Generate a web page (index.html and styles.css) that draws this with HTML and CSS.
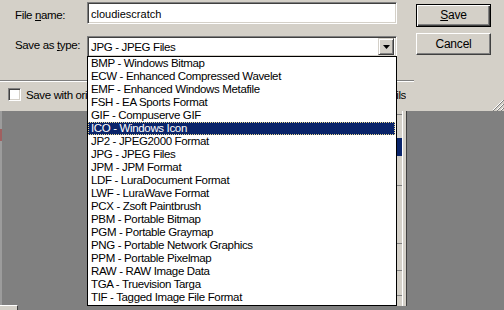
FILE: index.html
```html
<!DOCTYPE html>
<html>
<head>
<meta charset="utf-8">
<link rel="stylesheet" href="styles.css">
</head>
<body>
<div class="screen">
  <div class="dialog">
    <div class="form">
      <div class="lbl">File <u>n</u>ame:</div>
      <div class="input">cloudiescratch</div>
      <div class="btn default"><u>S</u>ave</div>
      <div class="lbl lbl2">Save as <u>t</u>ype:</div>
      <div class="combo"><span class="combo-text">JPG - JPEG Files</span><span class="arrow"><svg width="7" height="4" viewBox="0 0 7 4"><path d="M0 0h7L3.5 4z" fill="#000"/></svg></span></div>
      <div class="btn cancel">Cancel</div>
    </div>
    <div class="sep"></div>
    <div class="opts">
      <span class="chk"></span>
      <span class="opt-text">Save with original date/time</span>
      <span class="opt-right"><span class="opt-right-inner">Keep EXIF details</span></span>
    </div>
    <svg class="grip" width="12" height="12" viewBox="0 0 12 12">
      <path d="M11 1L1 11M11 5L5 11M11 9L9 11" stroke="#fff" stroke-width="1"/>
      <path d="M12 1L1 12M12 5L5 12M12 9L9 12" stroke="#808080" stroke-width="1"/>
    </svg>
  </div>
  <div class="desk">
    <div class="edge"></div>
    <div class="corner"></div>
    <div class="strip"><div class="strip-blue"></div></div>
  </div>
  <ul class="list">
    <li>BMP - Windows Bitmap</li>
    <li>ECW - Enhanced Compressed Wavelet</li>
    <li>EMF - Enhanced Windows Metafile</li>
    <li>FSH - EA Sports Format</li>
    <li>GIF - Compuserve GIF</li>
    <li class="sel">ICO - Windows Icon</li>
    <li>JP2 - JPEG2000 Format</li>
    <li>JPG - JPEG Files</li>
    <li>JPM - JPM Format</li>
    <li>LDF - LuraDocument Format</li>
    <li>LWF - LuraWave Format</li>
    <li>PCX - Zsoft Paintbrush</li>
    <li>PBM - Portable Bitmap</li>
    <li>PGM - Portable Graymap</li>
    <li>PNG - Portable Network Graphics</li>
    <li>PPM - Portable Pixelmap</li>
    <li>RAW - RAW Image Data</li>
    <li>TGA - Truevision Targa</li>
    <li>TIF - Tagged Image File Format</li>
  </ul>
</div>
</body>
</html>
```

FILE: styles.css
```css
html, body {
  margin: 0;
  padding: 0;
}
body {
  width: 504px;
  height: 310px;
  overflow: hidden;
  background: #808080;
  font-family: "Liberation Sans", Arial, sans-serif;
  font-size: 11.5px;
  letter-spacing: -0.35px;
  color: #000;
}
.screen {
  position: relative;
  width: 504px;
  height: 310px;
  display: flex;
  flex-direction: column;
}
.dialog {
  position: relative;
  height: 111px;
  background: #d4d0c8;
  flex: none;
}
.form {
  display: grid;
  grid-template-columns: 87px 310px 75px;
  grid-template-rows: 31px 47px;
  padding-top: 2px;
}
.lbl {
  padding-left: 15px;
  padding-top: 2px;
  line-height: 22px;
}
.lbl2 {
  padding-top: 1px;
}
.input {
  box-sizing: border-box;
  height: 22px;
  background: #fff;
  border-top: 1px solid #808080;
  border-left: 1px solid #808080;
  border-right: 1px solid #fff;
  border-bottom: 1px solid #fff;
  box-shadow: inset 1px 1px 0 #404040, inset -1px -1px 0 #d4d0c8;
  padding-left: 3px;
  padding-top: 1px;
  line-height: 20px;
  font-size: 11px;
  letter-spacing: 0;
}
.btn {
  box-sizing: border-box;
  margin-left: 19px;
  width: 75px;
  height: 22px;
  text-align: center;
  line-height: 20px;
  font-size: 12px;
  letter-spacing: -0.2px;
  background: #d4d0c8;
  border-top: 1px solid #fff;
  border-left: 1px solid #fff;
  border-right: 1px solid #404040;
  border-bottom: 1px solid #404040;
  box-shadow: inset -1px -1px 0 #808080;
}
.btn.default {
  margin-top: 2px;
  height: 23px;
  border: 1px solid #000;
  box-shadow: inset 1px 1px 0 #fff, inset -1px -1px 0 #404040, inset -2px -2px 0 #808080;
  line-height: 21px;
}
.combo {
  box-sizing: border-box;
  margin-top: 3px;
  height: 21px;
  background: #fff;
  border-top: 1px solid #808080;
  border-left: 1px solid #808080;
  border-right: 1px solid #fff;
  border-bottom: 1px solid #fff;
  box-shadow: inset 1px 1px 0 #404040, inset -1px -1px 0 #d4d0c8;
  display: flex;
  align-items: center;
  padding: 2px 2px 2px 3px;
}
.combo-text {
  flex: 1;
}
.arrow {
  box-sizing: border-box;
  width: 16px;
  height: 17px;
  background: #d4d0c8;
  border-top: 1px solid #d4d0c8;
  border-left: 1px solid #d4d0c8;
  border-right: 1px solid #404040;
  border-bottom: 1px solid #404040;
  box-shadow: inset 1px 1px 0 #fff, inset -1px -1px 0 #808080;
  display: flex;
  align-items: center;
  justify-content: center;
}
.sep {
  width: 414px;
  height: 1px;
  background: #808080;
  border-bottom: 1px solid #fff;
}
.opts {
  display: flex;
  align-items: center;
  height: 13px;
  margin-top: 6px;
  padding-left: 8px;
}
.chk {
  box-sizing: border-box;
  flex: none;
  width: 13px;
  height: 13px;
  background: #fff;
  border-top: 1px solid #808080;
  border-left: 1px solid #808080;
  border-right: 1px solid #fff;
  border-bottom: 1px solid #fff;
  box-shadow: inset 1px 1px 0 #404040, inset -1px -1px 0 #d4d0c8;
  margin-right: 5px;
}
.opt-text {
  width: 61px;
  overflow: hidden;
  white-space: nowrap;
}
.opt-right {
  margin-left: auto;
  margin-right: 98px;
  width: 9px;
  overflow: hidden;
  display: flex;
  justify-content: flex-end;
  white-space: nowrap;
}
.opt-right-inner {
  flex: none;
}
.grip {
  position: absolute;
  right: 0;
  bottom: 0;
}
.desk {
  position: relative;
  flex: 1;
  background: #808080;
}
.edge {
  position: absolute;
  left: 0;
  top: 0;
  width: 2px;
  height: 195px;
  background: linear-gradient(#9c9c9c 0 18px, #a06060 18px 30px, #9c9c9c 30px);
}
.corner {
  position: absolute;
  left: 0;
  bottom: 0;
  width: 17px;
  height: 4px;
  background: #d4d0c8;
  border-top: 1px solid #fff;
  border-right: 1px solid #404040;
}
.strip {
  position: absolute;
  left: 397px;
  top: 0;
  width: 9px;
  height: 195px;
  background:
    linear-gradient(#808080, #808080) 0 3px / 5px 1px no-repeat,
    linear-gradient(#808080, #808080) 0 74px / 5px 1px no-repeat,
    linear-gradient(#808080, #808080) 0 132px / 5px 1px no-repeat,
    linear-gradient(#808080, #808080) 0 159px / 5px 1px no-repeat,
    linear-gradient(#808080, #808080) 0 184px / 5px 1px no-repeat,
    linear-gradient(90deg, #d4d0c8 0 5px, #fff 5px 6px, #d4d0c8 6px);
  border-right: 1px solid #404040;
}
.strip-blue {
  position: absolute;
  left: 0;
  top: 27px;
  width: 5px;
  height: 18px;
  background: #0a246a;
}
.list {
  position: absolute;
  left: 87px;
  top: 56px;
  width: 310px;
  height: 250px;
  box-sizing: border-box;
  margin: 0;
  padding: 0;
  list-style: none;
  background: #fff;
  border: 1px solid #000;
}
.list li {
  height: 13px;
  line-height: 13px;
  padding-left: 3px;
  white-space: nowrap;
}
.list li.sel {
  background: #0a246a;
  color: #fff;
  outline: 1px dotted #e8d890;
  outline-offset: -1px;
  margin-right: 1px;
}
```
